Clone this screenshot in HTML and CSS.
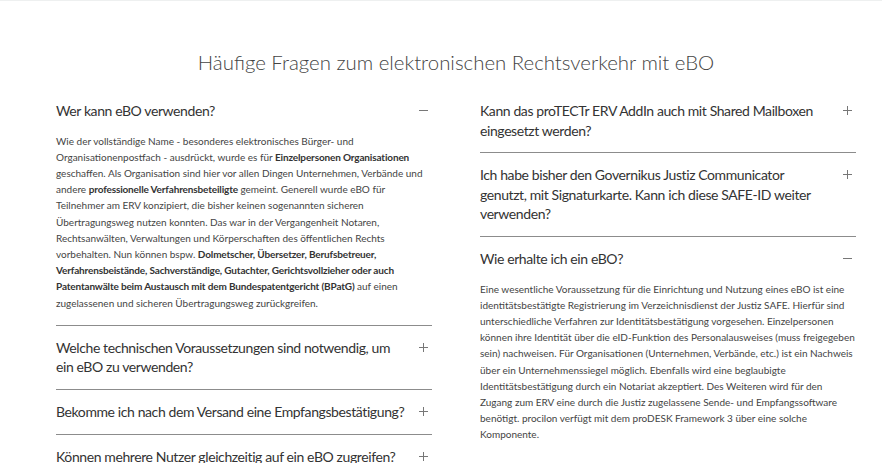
FILE: index.html
```html
<!DOCTYPE html>
<html lang="de">
<head>
<meta charset="utf-8">
<title>FAQ eBO</title>
<link rel="stylesheet" href="styles.css">
</head>
<body>
<main class="faq">
  <h2 class="faq-title">Häufige Fragen zum elektronischen Rechtsverkehr mit eBO</h2>
  <div class="faq-grid">
    <div class="faq-col">
      <div class="faq-item">
        <div class="faq-q"><span class="q-text">Wer kann eBO verwenden?</span><span class="q-icon minus"></span></div>
        <div class="faq-a">Wie der vollständige Name - besonderes elektronisches Bürger- und<br>
Organisationenpostfach - ausdrückt, wurde es für <b>Einzelpersonen Organisationen</b><br>
geschaffen. Als Organisation sind hier vor allen Dingen Unternehmen, Verbände und<br>
andere <b>professionelle Verfahrensbeteiligte</b> gemeint. Generell wurde eBO für<br>
Teilnehmer am ERV konzipiert, die bisher keinen sogenannten sicheren<br>
Übertragungsweg nutzen konnten. Das war in der Vergangenheit Notaren,<br>
Rechtsanwälten, Verwaltungen und Körperschaften des öffentlichen Rechts<br>
vorbehalten. Nun können bspw. <b>Dolmetscher, Übersetzer, Berufsbetreuer,<br>
Verfahrensbeistände, Sachverständige, Gutachter, Gerichtsvollzieher oder auch<br>
Patentanwälte beim Austausch mit dem Bundespatentgericht (BPatG)</b> auf einen<br>
zugelassenen und sicheren Übertragungsweg zurückgreifen.</div>
      </div>
      <div class="faq-item">
        <div class="faq-q"><span class="q-text">Welche technischen Voraussetzungen sind notwendig, um ein eBO zu verwenden?</span><span class="q-icon plus"></span></div>
      </div>
      <div class="faq-item">
        <div class="faq-q"><span class="q-text">Bekomme ich nach dem Versand eine Empfangsbestätigung?</span><span class="q-icon plus"></span></div>
      </div>
      <div class="faq-item">
        <div class="faq-q"><span class="q-text">Können mehrere Nutzer gleichzeitig auf ein eBO zugreifen?</span><span class="q-icon plus"></span></div>
      </div>
    </div>
    <div class="faq-col">
      <div class="faq-item">
        <div class="faq-q"><span class="q-text">Kann das proTECTr ERV AddIn auch mit Shared Mailboxen eingesetzt werden?</span><span class="q-icon plus"></span></div>
      </div>
      <div class="faq-item">
        <div class="faq-q"><span class="q-text">Ich habe bisher den Governikus Justiz Communicator genutzt, mit Signaturkarte. Kann ich diese SAFE-ID weiter verwenden?</span><span class="q-icon plus"></span></div>
      </div>
      <div class="faq-item">
        <div class="faq-q"><span class="q-text">Wie erhalte ich ein eBO?</span><span class="q-icon minus"></span></div>
        <div class="faq-a">Eine wesentliche Voraussetzung für die Einrichtung und Nutzung eines eBO ist eine<br>
identitätsbestätigte Registrierung im Verzeichnisdienst der Justiz SAFE. Hierfür sind<br>
unterschiedliche Verfahren zur Identitätsbestätigung vorgesehen. Einzelpersonen<br>
können ihre Identität über die eID-Funktion des Personalausweises (muss freigegeben<br>
sein) nachweisen. Für Organisationen (Unternehmen, Verbände, etc.) ist ein Nachweis<br>
über ein Unternehmenssiegel möglich. Ebenfalls wird eine beglaubigte<br>
Identitätsbestätigung durch ein Notariat akzeptiert. Des Weiteren wird für den<br>
Zugang zum ERV eine durch die Justiz zugelassene Sende- und Empfangssoftware<br>
benötigt. procilon verfügt mit dem proDESK Framework 3 über eine solche<br>
Komponente.</div>
      </div>
    </div>
  </div>
</main>
</body>
</html>
```

FILE: styles.css
```css
html, body {
  margin: 0;
  padding: 0;
  background: #ffffff;
}

body {
  border-top: 1px solid #eef0f0;
  font-family: Lato, "Open Sans", "Liberation Sans", sans-serif;
  color: #3a3a3a;
}

.faq {
  width: 800px;
  margin-left: 56px;
  padding-top: 49px;
}

.faq-title {
  margin: 0 0 15px;
  font-size: 20.4px;
  line-height: 24px;
  font-weight: 300;
  color: #444444;
  text-align: center;
}

.faq-grid {
  display: grid;
  grid-template-columns: 1fr 1fr;
  column-gap: 48px;
  align-items: start;
}

.faq-item {
  border-bottom: 1px solid #8c8c8c;
}

.faq-item:last-child {
  border-bottom: none;
}

.faq-q {
  display: flex;
  align-items: flex-start;
  gap: 10px;
  padding: 12px 4px 12px 0;
  font-size: 14px;
  line-height: 19.6px;
  letter-spacing: -0.4px;
  color: #333333;
}

.q-text {
  flex: 1;
}

.q-icon {
  position: relative;
  flex: 0 0 9px;
  height: 9px;
  margin-top: 5px;
}

.q-icon::before {
  content: "";
  position: absolute;
  left: 0;
  right: 0;
  top: 4px;
  height: 1px;
  background: #777777;
}

.q-icon.plus::after {
  content: "";
  position: absolute;
  top: 0;
  bottom: 0;
  left: 4px;
  width: 1px;
  background: #777777;
}

.faq-a {
  padding: 0 0 14px 0;
  font-size: 10px;
  line-height: 16.2px;
  white-space: nowrap;
  color: #444444;
}

.faq-a b {
  font-weight: 700;
  letter-spacing: -0.15px;
  color: #333333;
}
```
